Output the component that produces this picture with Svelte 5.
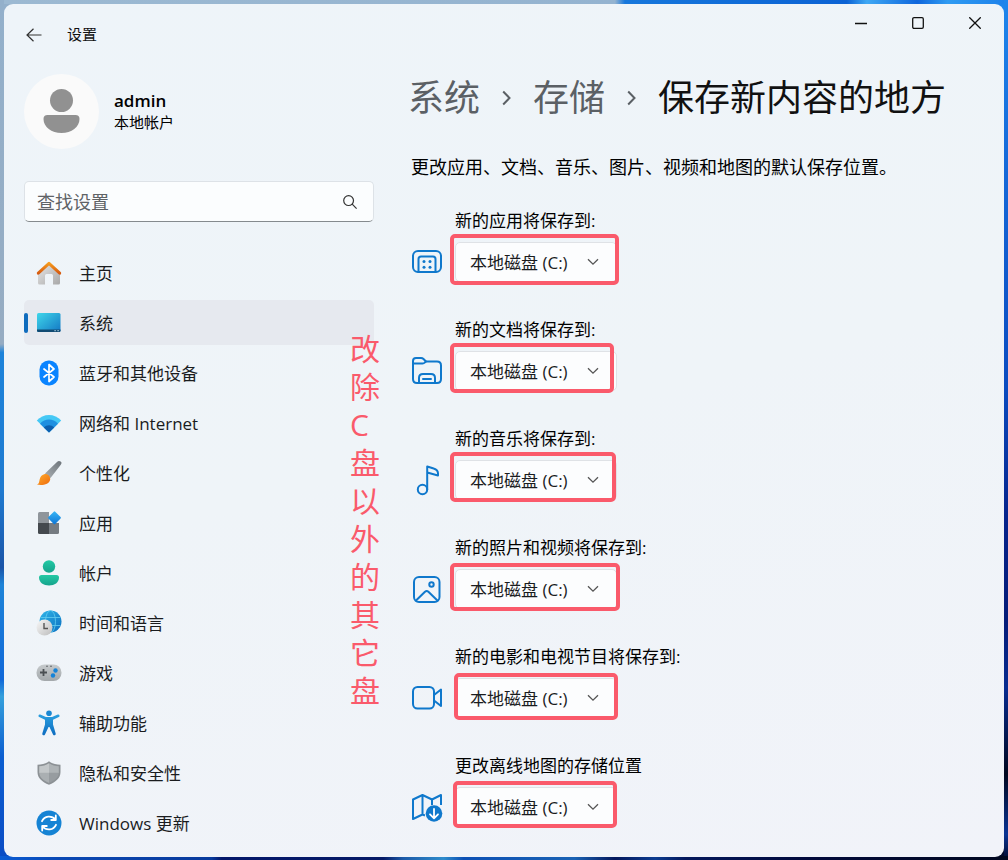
<script>
  const nav = [
    { id: 'home', label: '主页' },
    { id: 'system', label: '系统', active: true },
    { id: 'bluetooth', label: '蓝牙和其他设备' },
    { id: 'network', label: '网络和 Internet' },
    { id: 'personal', label: '个性化' },
    { id: 'apps', label: '应用' },
    { id: 'accounts', label: '帐户' },
    { id: 'time', label: '时间和语言' },
    { id: 'gaming', label: '游戏' },
    { id: 'access', label: '辅助功能' },
    { id: 'privacy', label: '隐私和安全性' },
    { id: 'update', label: 'Windows 更新' }
  ];

  // mark: [left, top, width, height] of the highlight frame, relative to the drop-down
  const rows = [
    { id: 'app', label: '新的应用将保存到:', mark: [-5, -8, 169, 51] },
    { id: 'doc', label: '新的文档将保存到:', mark: [-5, -8, 164, 50] },
    { id: 'music', label: '新的音乐将保存到:', mark: [-5, -8, 166, 50] },
    { id: 'photo', label: '新的照片和视频将保存到:', mark: [-5, -6, 170, 48] },
    { id: 'video', label: '新的电影和电视节目将保存到:', mark: [-1, -5, 164, 47] },
    { id: 'map', label: '更改离线地图的存储位置', mark: [-2, -6, 164, 47] }
  ];

  const note = [...'改除C盘以外的其它盘'];
</script>

<svelte:head><title>设置</title></svelte:head>

<div class="window">
  <header class="titlebar">
    <button class="back" aria-label="返回">
      <svg width="16" height="14" viewBox="0 0 16 14" fill="none" stroke="#333" stroke-width="1.2"><path d="M7.5 .8 1 7l6.500 6.200M1 7h14.500" /></svg>
    </button>
    <span class="app-name">设置</span>
    <div class="controls">
      <button aria-label="最小化"><svg width="12" height="12" viewBox="0 0 12 12" stroke="#111" stroke-width="1.300"><path d="M0 6.500h12" /></svg></button>
      <button aria-label="最大化"><svg width="12" height="12" viewBox="0 0 12 12" fill="none" stroke="#111" stroke-width="1.300"><rect x=".7" y=".7" width="10.600" height="10.600" rx="1.300" /></svg></button>
      <button aria-label="关闭"><svg width="12" height="12" viewBox="0 0 12 12" stroke="#111" stroke-width="1.300"><path d="M.3.3l11.400 11.400M11.700.3.3 11.700" /></svg></button>
    </div>
  </header>

  <div class="columns">
    <aside>
      <div class="profile">
        <svg width="75" height="75" viewBox="0 0 75 75">
          <circle cx="37.500" cy="37.500" r="37.500" fill="#fafafa" />
          <circle cx="37.500" cy="26.500" r="11.500" fill="#919191" />
          <path d="M23.500 41h28q4 0 4 4c0 8-8 14-18 14s-18-6-18-14q0-4 4-4z" fill="#919191" />
        </svg>
        <div>
          <div class="user">admin</div>
          <div class="kind">本地帐户</div>
        </div>
      </div>

      <label class="search">
        <input type="text" placeholder="查找设置" aria-label="查找设置" />
        <svg width="14" height="14" viewBox="0 0 14 14" fill="none" stroke="#333" stroke-width="1.200"><circle cx="5.600" cy="5.600" r="4.900" /><path d="M9.200 9.200l4.400 4.400" /></svg>
      </label>

      <nav>
        {#each nav as item}
          <a href="#{item.id}" class:active={item.active}>
            <svg width="26" height="26" viewBox="0 0 26 26">
              {#if item.id === 'home'}
                <defs>
                  <linearGradient id="hw" x2="1" y2="1"><stop stop-color="#e8e8e8" /><stop offset="1" stop-color="#a8a8a8" /></linearGradient>
                  <linearGradient id="hr" x2="0" y2="1"><stop stop-color="#f59a1d" /><stop offset="1" stop-color="#d65a10" /></linearGradient>
                </defs>
                <path d="M2 12 13 2.500 24 12v11q0 1.500-1.500 1.500H17V15.500q0-1.500-1.500-1.500h-5Q9 14 9 15.500v9H3.500Q2 24.500 2 23z" fill="url(#hw)" />
                <path d="M2.300 13.200 13 3.400l10.700 9.800" fill="none" stroke="url(#hr)" stroke-width="3" stroke-linecap="round" stroke-linejoin="round" />
              {:else if item.id === 'system'}
                <defs><linearGradient id="sy" x2="1" y2="1"><stop stop-color="#3fd6ea" /><stop offset="1" stop-color="#1377c4" /></linearGradient></defs>
                <rect x="1" y="3" width="23.500" height="19" rx="1.500" fill="url(#sy)" />
                <path d="M1 19.500h23.500v1q0 1.500-1.500 1.500H2.500Q1 22 1 20.500z" fill="#114b73" />
                <path d="M18.500 20.700h1.200m1.800 0h1.200" stroke="#d6f2ff" stroke-width="1" />
              {:else if item.id === 'bluetooth'}
                <rect x="3.500" y=".5" width="19" height="25" rx="9" fill="#0a84ff" />
                <path d="M8 9l10 8-5 4.500v-17L18 9 8 17" fill="none" stroke="#fff" stroke-width="1.700" stroke-linejoin="round" stroke-linecap="round" />
              {:else if item.id === 'network'}
                <path d="M.8 10.500C7 3 19 3 25.200 10.500L13 22.500z" fill="#45c8f5" />
                <path d="M4 13.700c5-5.500 13-5.500 18 0l-9 8.800z" fill="#1e8fe0" />
                <path d="M7.800 17.400c3-3 7.400-3 10.400 0L13 22.500z" fill="#0c5fae" />
              {:else if item.id === 'personal'}
                <defs>
                  <linearGradient id="pb" x1="1" x2="0" y2="1"><stop stop-color="#6d747a" /><stop offset="1" stop-color="#a9afb3" /></linearGradient>
                  <linearGradient id="po" x2="1" y2="1"><stop stop-color="#ffae2e" /><stop offset="1" stop-color="#ee6a0c" /></linearGradient>
                </defs>
                <path d="M23 1q2 0 2.500 1.500.2 1-.7 2.200L14.500 18 9 13.500 21 2q1-1 2-1z" fill="url(#pb)" />
                <path d="M8.200 14.200c3-1 6.500 1.800 6 5.300C13.500 24.500 6 26 .7 24.600c2.800-1 2.300-2.800 3-5.400.6-2.600 2-4.200 4.500-5z" fill="url(#po)" />
              {:else if item.id === 'apps'}
                <defs><linearGradient id="ap" x2="1" y2="1"><stop stop-color="#37b6f6" /><stop offset="1" stop-color="#0c74d6" /></linearGradient></defs>
                <path d="M3.500 2H13v11H2V3.500Q2 2 3.500 2z" fill="#8f959b" />
                <path d="M2 13h11v11H3.500Q2 24 2 22.500z" fill="#44494e" />
                <path d="M13 13h10v9.500q0 1.500-1.500 1.500H13z" fill="#757b81" />
                <rect x="13.700" y="3" width="9.600" height="9.600" rx="1" transform="rotate(45 18.500 7.800)" fill="url(#ap)" />
              {:else if item.id === 'accounts'}
                <defs><linearGradient id="ac" x2="0" y2="1"><stop stop-color="#23c9a4" /><stop offset="1" stop-color="#15a38c" /></linearGradient></defs>
                <circle cx="13" cy="6.500" r="6.200" fill="url(#ac)" />
                <path d="M5.500 15h15q2.500 0 2.500 2.500c0 5-4.500 8-10 8s-10-3-10-8Q3 15 5.500 15z" fill="url(#ac)" />
              {:else if item.id === 'time'}
                <defs>
                  <linearGradient id="tg" x2="1" y2="1"><stop stop-color="#2fb5e8" /><stop offset="1" stop-color="#0b6fc0" /></linearGradient>
                  <linearGradient id="tc" x2="1" y2="1"><stop stop-color="#f8f8f8" /><stop offset="1" stop-color="#bdbdbd" /></linearGradient>
                </defs>
                <circle cx="14.500" cy="11.500" r="11" fill="url(#tg)" />
                <g fill="none" stroke="#63cdf0" stroke-width=".8"><ellipse cx="14.500" cy="11.500" rx="5" ry="11" /><path d="M4.500 7.500h20M4.500 15.500h20" /></g>
                <circle cx="8.500" cy="17.500" r="8" fill="url(#tc)" />
                <path d="M8 13v5.500h4" fill="none" stroke="#555" stroke-width="1.400" />
              {:else if item.id === 'gaming'}
                <defs><linearGradient id="ga" x2="0" y2="1"><stop stop-color="#c6cacc" /><stop offset="1" stop-color="#a3a8ab" /></linearGradient></defs>
                <rect x=".5" y="4.500" width="25" height="16.500" rx="8" fill="url(#ga)" />
                <path d="M7.500 9v7M4 12.500h7" stroke="#4a4f53" stroke-width="1.800" />
                <circle cx="19.500" cy="10.500" r="2.200" fill="#1683d8" /><circle cx="17" cy="15.500" r="2.200" fill="#1683d8" />
                <circle cx="11" cy="6.200" r=".8" fill="#55595c" /><circle cx="15" cy="6.200" r=".8" fill="#55595c" />
              {:else if item.id === 'access'}
                <defs><linearGradient id="as" x2="0" y2="1"><stop stop-color="#2a9fe0" /><stop offset="1" stop-color="#0d6cc0" /></linearGradient></defs>
                <circle cx="13" cy="3.200" r="2.800" fill="#1a87d2" />
                <path d="M4.200 4.600 10 7h6l5.800-2.400q1.300-.3 1.700.8.300 1.200-.7 1.700L17 9.800v4.700l2.700 9q.2 1.400-.9 1.800-1.200.3-1.800-.8L13.500 17h-1L9 24.500q-.6 1.100-1.800.8-1.100-.4-.9-1.800l2.700-9V9.800L3.200 7.100q-1-.5-.7-1.700.4-1.100 1.700-.8z" fill="url(#as)" />
              {:else if item.id === 'privacy'}
                <path d="M13 1.200c3 2.300 7 3.300 11.500 3.500V12c0 6-4.500 10-11.500 12.800C6 22 1.500 18 1.500 12V4.700C6 4.500 10 3.500 13 1.200z" fill="#8c9195" />
                <path d="M13 3.200c3 2 6.300 2.700 9.800 3V13H13z" fill="#aeb3b6" /><path d="M13 3.200c-3 2-6.300 2.700-9.800 3V13H13z" fill="#c3c7c9" />
                <path d="M3.200 12.800H13v10.100C7.500 20.700 3.500 17.500 3.200 12.800z" fill="#aaafb2" /><path d="M22.800 12.800H13v10.100c5.500-2.200 9.500-5.400 9.800-10.100z" fill="#979ca0" />
              {:else}
                <circle cx="13" cy="13" r="12.500" fill="#1583d4" />
                <path d="M6 11.200c2.500-5.500 9.500-6.200 13.500-1.700M19.800 5.500V10h-4.600M20 14.800c-2.500 5.500-9.500 6.200-13.500 1.700M6.200 20.500V16h4.600" fill="none" stroke="#fff" stroke-width="1.800" stroke-linecap="round" stroke-linejoin="round" />
              {/if}
            </svg>
            <span>{item.label}</span>
          </a>
        {/each}
      </nav>
    </aside>

    <main>
      <h1>
        <a href="#system">系统</a>
        <svg width="9" height="16" viewBox="0 0 9 16" fill="none" stroke="#5b6065" stroke-width="2"><path d="M1.200 1.500 7.500 8l-6.300 6.500" /></svg>
        <a href="#storage">存储</a>
        <svg width="9" height="16" viewBox="0 0 9 16" fill="none" stroke="#5b6065" stroke-width="2"><path d="M1.200 1.500 7.500 8l-6.300 6.500" /></svg>
        <span>保存新内容的地方</span>
      </h1>
      <p>更改应用、文档、音乐、图片、视频和地图的默认保存位置。</p>

      <div class="rows">
        {#each rows as row}
          <div class="row">
            <label for="sel-{row.id}">{row.label}</label>
            <svg class="icon" width="32" height="32" viewBox="0 0 32 32" fill="none" stroke="#0f78cc" stroke-width="2" stroke-linejoin="round" stroke-linecap="round">
              {#if row.id === 'app'}
                <rect x="2" y="5" width="28" height="21" rx="5" />
                <path d="M7.500 26V13q0-2.500 2.500-2.500h12q2.500 0 2.500 2.500v13" />
                <g fill="#0f78cc" stroke="none"><circle cx="13" cy="15.500" r="1.500" /><circle cx="19" cy="15.500" r="1.500" /><circle cx="13" cy="21.300" r="1.500" /><circle cx="19" cy="21.300" r="1.500" /></g>
              {:else if row.id === 'doc'}
                <path d="M6 28q-4 0-4-4V6q0-3 3-3h5q1.500 0 2.500 1l2.500 2.500h11q4 0 4 4V24q0 4-4 4z" />
                <path d="M2 8.500h9.500q1.500 0 2.300-1L15 6.500M8 28v-5q0-4 4-4h8q4 0 4 4v5M12 24h8" />
              {:else if row.id === 'music'}
                <circle cx="11.500" cy="25.500" r="4.700" /><path d="M16.200 25.500V2.500l6.500 2q4.300 1.200 4.300 5v2L16.200 8.500" />
              {:else if row.id === 'photo'}
                <rect x="3" y="4" width="25.500" height="25" rx="5" /><circle cx="20.500" cy="11.500" r="2.200" /><path d="M5 27.500l9-8.800q1.700-1.500 3.400 0l9 8.800" />
              {:else if row.id === 'video'}
                <rect x="2" y="5" width="21" height="21.500" rx="4.500" /><path d="M23 13l7-5.500v16.500L23 18.500" />
              {:else}
                <path d="M11.500 23.500 2 28V8.500L11.500 4l9.500 4.500L30 4v10M11.500 4v19.500l2.500 1M21 8.500v5.500" stroke-linecap="butt" />
                <circle cx="23" cy="22.500" r="8.300" fill="#0f78cc" stroke="none" /><path d="M23 18v9M19 23.300l4 4 4-4" stroke="#fff" stroke-width="1.800" />
              {/if}
            </svg>
            <div class="pick">
              <select id="sel-{row.id}"><option>本地磁盘 (C:)</option></select>
              <svg class="chevron" width="12" height="8" viewBox="0 0 12 8" fill="none" stroke="#555" stroke-width="1.300"><path d="M1 1.200 6 6.200l5-5" /></svg>
              <span class="mark" style="left:{row.mark[0]}px;top:{row.mark[1]}px;width:{row.mark[2]}px;height:{row.mark[3]}px"></span>
            </div>
          </div>
        {/each}
      </div>

      <div class="note">{#each note as ch}<span>{ch}</span>{/each}</div>
    </main>
  </div>
</div>

<style>
  :global(body) {
    min-height: 100vh;
    font-family: 'Open Sans', 'Noto Sans CJK SC', sans-serif;
    font-size: 17px;
    color: #111;
    background:
      linear-gradient(90deg, #0a5cd4 0, #0a48b4 6%, #083a9c 21%, #04176a 22%, #051a66 38%, #1c5aa8 40%, #2f8ccc 44%, #0c50b4 46%, #1a62b4 57%, #04185c 61%, #0c3c90 65%, #04185c 68%, #020a3c 80%, #01081f) bottom / 100% 4px no-repeat,
      linear-gradient(#93b0cb 0, #96acc2 40%, #1d83da 41%, #1f7ad0 57%, #1b55a8 66%, #1e84d8 68%, #1168d8 79%, #35a0dc 81%, #0c5ed0 88%, #0a4cc4) left / 4px 100% no-repeat,
      linear-gradient(#1e86ec 0, #1568d8 20%, #0b4cc0 45%, #06248c 60%, #051c78 72%, #082c90 80%, #01081f 90%, #0a3494 97%, #020a2c) right / 4px 100% no-repeat,
      linear-gradient(90deg, #9cb9d2 0, #94b3d0 61%, #1677dc 62%, #0b62d4 84%, #3fa8f4 86%, #0f66dc 91%, #2f9bf2 94%, #1c80ea) top / 100% 4px no-repeat,
      linear-gradient(#93b0cb 0 50%, #0a4cc4 50%) left / 50% 100% no-repeat,
      linear-gradient(#1e86ec 0 50%, #020a2c 50%) right / 50% 100% no-repeat;
  }
  .window {
    box-sizing: border-box;
    min-height: calc(100vh - 7px);
    border-radius: 9px;
    background: linear-gradient(165deg, #eef4f9, #eff4f8 50%, #f1f3f9);
    overflow: hidden;
  }
  :global(#app) { padding: 4px 4px 3px; }
  button { border: 0; padding: 0; background: none; display: grid; place-items: center; }
  svg { display: block; flex: none; }
  a { color: inherit; text-decoration: none; }

  .titlebar { display: flex; align-items: flex-start; height: 60px; }
  .back { width: 60px; height: 62px; }
  .app-name { padding-left: 3px; font-size: 15px; line-height: 60px; }
  .controls { display: flex; margin-left: auto; padding-right: 1px; }
  .controls button { width: 57px; height: 38px; }

  .columns { display: flex; }
  aside { width: 350px; flex: none; padding: 10px 0 0 20px; }
  .profile { display: flex; align-items: center; gap: 15px; height: 75px; }
  .user { font-size: 17px; font-weight: 600; line-height: 20px; color: #000; }
  .kind { font-size: 15px; line-height: 22px; color: #000; }

  .search {
    display: flex;
    align-items: center;
    box-sizing: border-box;
    height: 41px;
    margin: 32px 0 28px;
    padding: 0 16px 0 12px;
    border: 1px solid #dde2e7;
    border-bottom-color: #858a8e;
    border-radius: 5px;
    background: #fbfdfe;
  }
  .search input {
    flex: 1;
    min-width: 0;
    border: 0;
    padding: 0;
    outline: 0;
    background: none;
    font: inherit;
    font-size: 18px;
  }
  .search input::placeholder { color: #5f6366; opacity: 1; }

  nav { display: flex; flex-direction: column; gap: 5px; }
  nav a {
    position: relative;
    display: flex;
    align-items: center;
    gap: 17px;
    height: 45px;
    padding-left: 12px;
    border-radius: 5px;
    color: #1a1c1e;
  }
  nav a.active { background: #e6e9ef; }
  nav a.active::before {
    content: '';
    position: absolute;
    left: 0;
    top: 13px;
    width: 4px;
    height: 20px;
    border-radius: 2px;
    background: #0f6cbd;
  }

  main { position: relative; flex: 1; min-width: 0; padding: 8px 20px 27px 37px; }
  h1 {
    display: flex;
    align-items: center;
    gap: 22px;
    margin: 0 0 0 -3px;
    font-size: 36px;
    font-weight: 400;
    line-height: 52px;
    white-space: nowrap;
  }
  h1 a { color: #5b6065; }
  p { margin: 30px 0 29px; font-size: 18px; line-height: 26px; color: #000; }

  .rows { display: flex; flex-direction: column; gap: 36px; }
  .row {
    display: grid;
    grid-template: 24px 40px / 32px 1fr;
    gap: 9px 12px;
    align-items: center;
    justify-items: start;
  }
  .row label { grid-column: 2; line-height: 24px; color: #000; }
  .pick { position: relative; }
  select {
    appearance: none;
    display: block;
    height: 40px;
    width: 162px;
    padding: 0 32px 0 14px;
    border: 1px solid #dfe2e6;
    border-radius: 5px;
    background: #fcfdfe;
    color: #1a1c1e;
    font: inherit;
  }
  .chevron { position: absolute; right: 18px; top: 16px; pointer-events: none; }
  .mark {
    position: absolute;
    box-sizing: border-box;
    border: 4px solid #fa5a6b;
    border-radius: 5px;
    pointer-events: none;
  }
  .note {
    position: absolute;
    left: -24px;
    top: 266px;
    font-size: 30px;
    line-height: 38px;
    color: #fa5a6b;
  }
  .note span { display: block; }
</style>
